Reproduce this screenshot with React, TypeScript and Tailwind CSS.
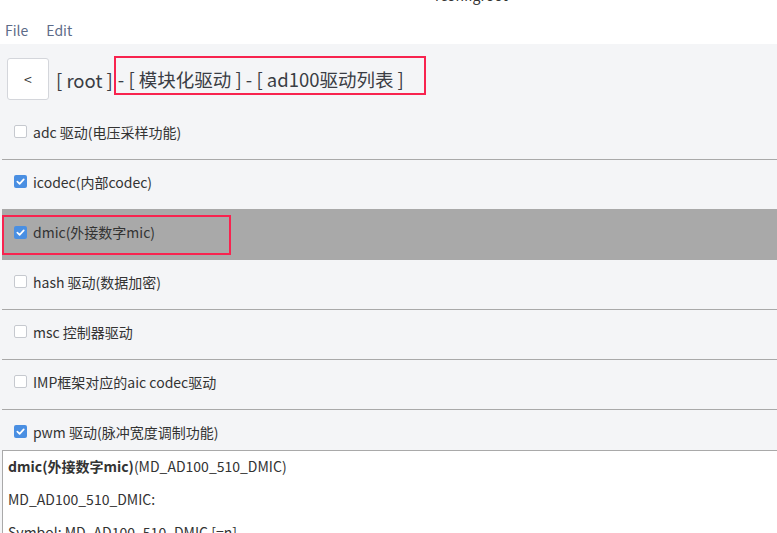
import React from 'react';

const font = { fontFamily: '"Noto Sans CJK SC", "Noto Sans", sans-serif' };

type Item = { label: string; checked: boolean; selected?: boolean };

const items: Item[] = [
  { label: 'adc 驱动(电压采样功能)', checked: false },
  { label: 'icodec(内部codec)', checked: true },
  { label: 'dmic(外接数字mic)', checked: true, selected: true },
  { label: 'hash 驱动(数据加密)', checked: false },
  { label: 'msc 控制器驱动', checked: false },
  { label: 'IMP框架对应的aic codec驱动', checked: false },
  { label: 'pwm 驱动(脉冲宽度调制功能)', checked: true },
];

const Check = ({ checked }: { checked: boolean }) =>
  checked ? (
    <span className="flex h-[13px] w-[13px] shrink-0 items-center justify-center rounded-[2px] bg-[#4a8fe2]">
      <svg width="9" height="9" viewBox="0 0 10 10">
        <polyline points="1.5,5.2 4,7.6 8.6,2.6" fill="none" stroke="white" strokeWidth="1.9" strokeLinecap="round" strokeLinejoin="round" />
      </svg>
    </span>
  ) : (
    <span className="block h-[13px] w-[13px] shrink-0 rounded-[2px] border border-[#c6c9cf] bg-white" />
  );

const Row = ({ item }: { item: Item }) => {
  const inner = (
    <>
      <Check checked={item.checked} />
      <span className="text-[14px] text-[#333] leading-[20px]">{item.label}</span>
    </>
  );
  if (item.selected) {
    return (
      <div className="flex h-[50px] shrink-0 items-start border-b border-[#a9a9a9] bg-[#a9a9a9]">
        <div className="mt-[5px] flex h-[40px] w-[229px] items-center gap-[6px] border-2 border-[#f8234f] pb-[6px] pl-[10px]">
          {inner}
        </div>
      </div>
    );
  }
  return (
    <div className="flex h-[50px] shrink-0 items-center gap-[6px] border-b border-[#a9a9a9] pb-[6px] pl-[12px]">
      {inner}
    </div>
  );
};

export default function App() {
  return (
    <div className="flex h-[533px] w-[777px] flex-col overflow-hidden bg-[#f4f5f7]" style={font}>
      {/* title + menu */}
      <div className="h-[44px] shrink-0 bg-white">
        <div className="h-[5px] overflow-hidden pl-[435px]">
          <div className="-mt-[15px] text-[14px] leading-[20px] text-[#333]">rconfigroot</div>
        </div>
        <div className="flex gap-[18px] pl-[5px] pt-[15px] text-[14px] leading-[20px] text-[#5d6b88]">
          <span>File</span>
          <span>Edit</span>
        </div>
      </div>

      {/* breadcrumb */}
      <div className="flex h-[66px] shrink-0 items-start pl-[7px] pt-[14px]">
        <button className="flex h-[42px] w-[42px] items-center justify-center rounded-[3px] border border-[#d4d6db] bg-white text-[14px] text-[#333]">
          &lt;
        </button>
        <span className="ml-[7px] mt-[9px] text-[18.5px] leading-[26px] text-[#3a3d44]">[ root ]</span>
        <span className="-mt-[2px] ml-[1px] h-[39px] border-2 border-[#f8234f] pl-[2px] pr-[20px] pt-[8px] text-[18.5px] leading-[26px] text-[#3a3d44]">
          - [ 模块化驱动 ] - [ ad100驱动列表 ]
        </span>
      </div>

      {/* list */}
      <div className="ml-[2px] flex h-[341px] shrink-0 flex-col overflow-hidden border-b border-[#a9a9a9]">
        {items.map((it) => (
          <Row key={it.label} item={it} />
        ))}
      </div>

      {/* help panel */}
      <div className="ml-[2px] flex-1 border-l border-[#a9a9a9] bg-white pl-[5px] text-[14px] leading-[33px] text-[#333]">
        <div className="-mt-[1px]">
          <b>dmic(外接数字mic)</b>(MD_AD100_510_DMIC)
        </div>
        <div>MD_AD100_510_DMIC:</div>
        <div>Symbol: MD_AD100_510_DMIC [=n]</div>
      </div>
    </div>
  );
}
